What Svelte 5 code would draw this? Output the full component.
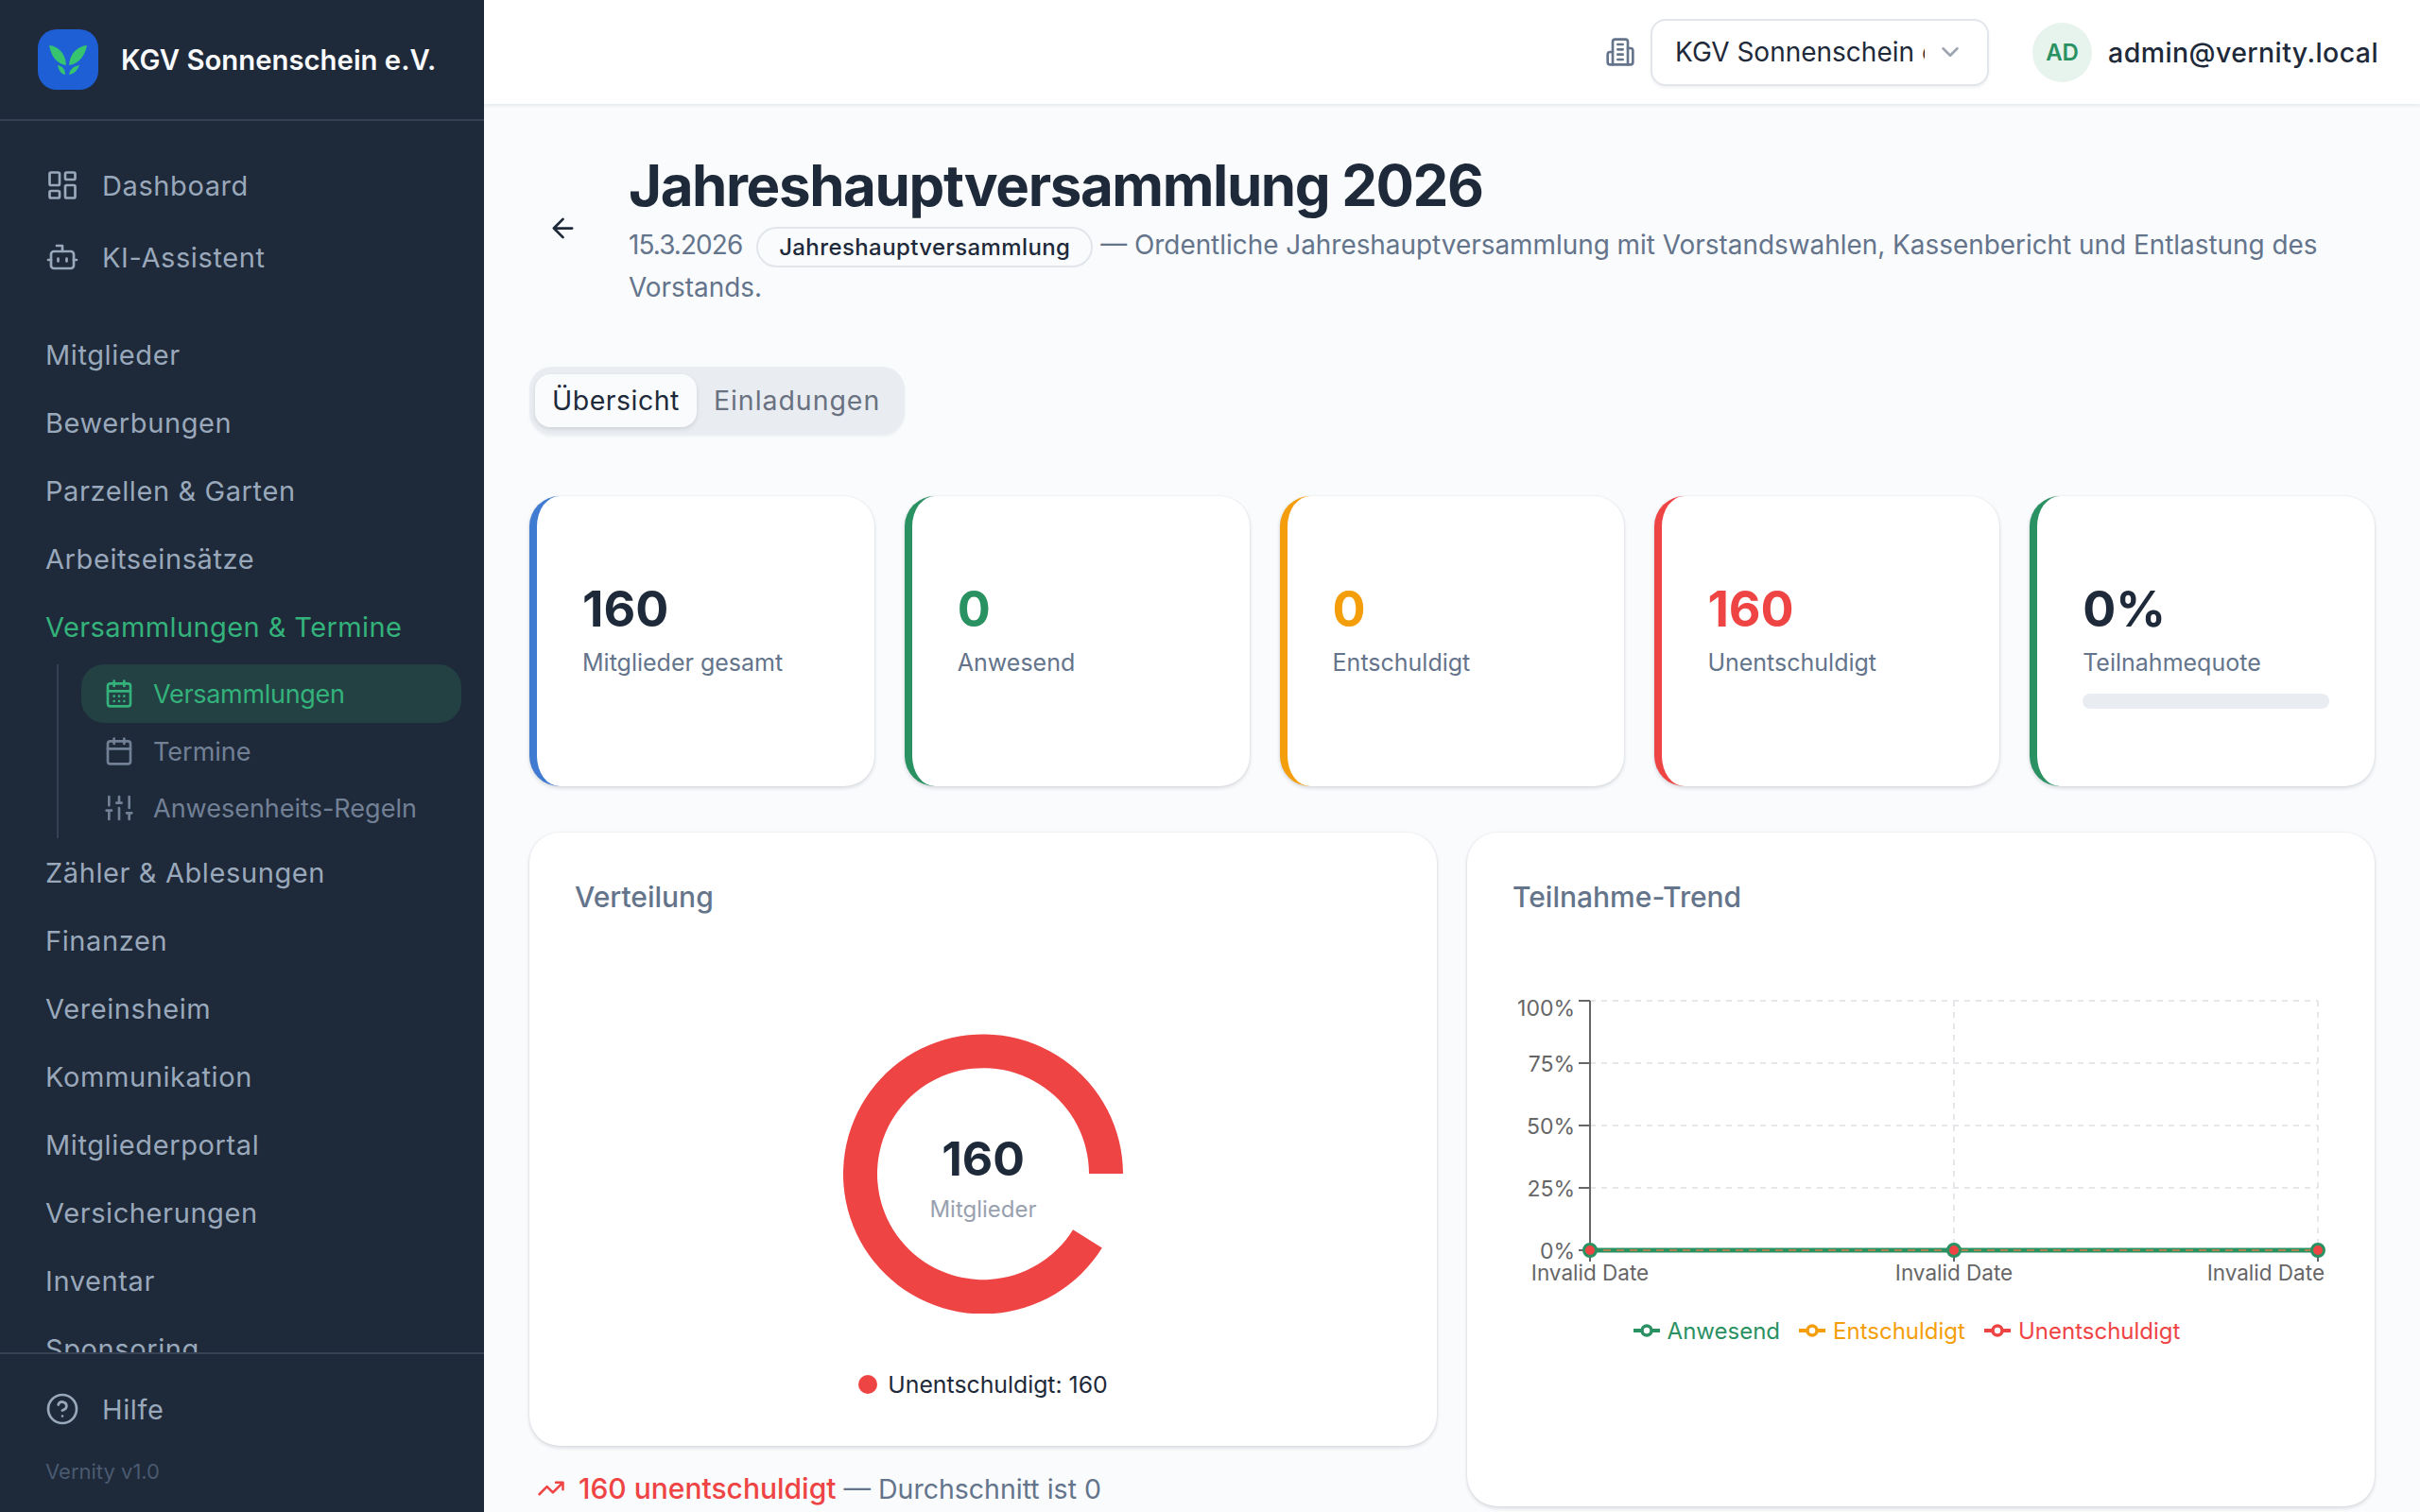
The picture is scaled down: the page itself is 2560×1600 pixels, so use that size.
<script>
	const groups = ['Mitglieder', 'Bewerbungen', 'Parzellen & Garten', 'Arbeitseinsätze'];
	const groupsAfter = [
		'Zähler & Ablesungen',
		'Finanzen',
		'Vereinsheim',
		'Kommunikation',
		'Mitgliederportal',
		'Versicherungen',
		'Inventar',
		'Sponsoring',
		'Einstellungen'
	];

	const stats = [
		{ value: '160', label: 'Mitglieder gesamt', accent: '#3f7bd0', color: '#1e2939' },
		{ value: '0', label: 'Anwesend', accent: '#2a9162', color: '#2a9162' },
		{ value: '0', label: 'Entschuldigt', accent: '#f59e0b', color: '#f59e0b' },
		{ value: '160', label: 'Unentschuldigt', accent: '#ef4444', color: '#ef4444' },
		{ value: '0%', label: 'Teilnahmequote', accent: '#2a9162', color: '#1e2939', bar: true }
	];

	// trend chart geometry
	const left = 82;
	const mid = 467;
	const right = 852;
	const top = 27;
	const step = 66;
	const yTicks = ['100%', '75%', '50%', '25%', '0%'];
	const xs = [left, mid, right];
	const legend = [
		{ label: 'Anwesend', color: '#2a9162' },
		{ label: 'Entschuldigt', color: '#f59e0b' },
		{ label: 'Unentschuldigt', color: '#ef4444' }
	];
</script>

<div class="shell">
	<aside class="sidebar">
		<div class="brand">
			<div class="logo">
				<svg viewBox="0 0 64 64" width="64" height="64">
					<path d="M12 17c9 1 17 7 18 21C20 37 14 28 12 17Z" fill="#37c46e" />
					<path d="M52 17c-9 1-18 7-19 21 10-1 17-10 19-21Z" fill="#37c46e" />
					<path d="M21 38c5 1 8 4 8 10-5-1-7-5-8-10Z" fill="#37c46e" />
					<path d="M44 38c-6 1-10 4-11 10 6-1 9-5 11-10Z" fill="#37c46e" />
				</svg>
			</div>
			<span class="brand-name">KGV Sonnenschein e.V.</span>
		</div>

		<nav class="nav">
			<a class="top-link">
				<svg class="ico" viewBox="0 0 24 24"><rect x="3" y="3" width="7" height="9" rx="1" /><rect x="14" y="3" width="7" height="5" rx="1" /><rect x="14" y="12" width="7" height="9" rx="1" /><rect x="3" y="16" width="7" height="5" rx="1" /></svg>
				Dashboard
			</a>
			<a class="top-link">
				<svg class="ico" viewBox="0 0 24 24"><path d="M12 8V4H8" /><rect x="4" y="8" width="16" height="12" rx="2" /><path d="M2 14h2M20 14h2M15 13v2M9 13v2" /></svg>
				KI-Assistent
			</a>

			<div class="groups">
				{#each groups as g}
					<a class="group">{g}</a>
				{/each}
				<a class="group open">Versammlungen &amp; Termine</a>
				<div class="subnav">
					<a class="sub active">
						<svg class="ico" viewBox="0 0 24 24"><path d="M8 2v4M16 2v4" /><rect x="3" y="4" width="18" height="18" rx="2" /><path d="M3 10h18M8 14h.01M12 14h.01M16 14h.01M8 18h.01M12 18h.01M16 18h.01" /></svg>
						Versammlungen
					</a>
					<a class="sub">
						<svg class="ico" viewBox="0 0 24 24"><path d="M8 2v4M16 2v4" /><rect x="3" y="4" width="18" height="18" rx="2" /><path d="M3 10h18" /></svg>
						Termine
					</a>
					<a class="sub">
						<svg class="ico" viewBox="0 0 24 24"><path d="M4 21v-7M4 10V3M12 21v-9M12 8V3M20 21v-5M20 12V3M2 14h4M10 8h4M18 16h4" /></svg>
						Anwesenheits-Regeln
					</a>
				</div>
				{#each groupsAfter as g}
					<a class="group">{g}</a>
				{/each}
			</div>
		</nav>

		<div class="side-foot">
			<a class="top-link help">
				<svg class="ico" viewBox="0 0 24 24"><circle cx="12" cy="12" r="10" /><path d="M9.09 9a3 3 0 0 1 5.83 1c0 2-3 3-3 3M12 17h.01" /></svg>
				Hilfe
			</a>
			<div class="version">Vernity v1.0</div>
		</div>
	</aside>

	<div class="main">
		<header class="topbar">
			<svg class="org-ico" viewBox="0 0 24 24"><path d="M6 22V4a2 2 0 0 1 2-2h8a2 2 0 0 1 2 2v18Z" /><path d="M6 12H4a2 2 0 0 0-2 2v6a2 2 0 0 0 2 2h2M18 9h2a2 2 0 0 1 2 2v9a2 2 0 0 1-2 2h-2M10 6h4M10 10h4M10 14h4M10 18h4" /></svg>
			<div class="org-select">
				<span class="org-name">KGV Sonnenschein e.V.</span>
				<svg class="chev" viewBox="0 0 24 24"><path d="m6 9 6 6 6-6" /></svg>
			</div>
			<div class="avatar">AD</div>
			<span class="email">admin@vernity.local</span>
		</header>

		<main class="content">
			<div class="page-head">
				<button class="back" aria-label="Zurück">
					<svg viewBox="0 0 24 24"><path d="m12 19-7-7 7-7M19 12H5" /></svg>
				</button>
				<div class="head-text">
					<h1>Jahreshauptversammlung 2026</h1>
					<p class="desc">
						<span class="date">15.3.2026</span> <span class="chip">Jahreshauptversammlung</span> — Ordentliche Jahreshauptversammlung mit Vorstandswahlen, Kassenbericht und Entlastung des Vorstands.
					</p>
				</div>
			</div>

			<div class="tabs">
				<button class="tab selected">Übersicht</button>
				<button class="tab">Einladungen</button>
			</div>

			<div class="stats">
				{#each stats as s}
					<div class="stat" style="border-left-color: {s.accent}">
						<div class="stat-value" style="color: {s.color}">{s.value}</div>
						<div class="stat-label">{s.label}</div>
						{#if s.bar}
							<div class="bar"></div>
						{/if}
					</div>
				{/each}
			</div>

			<div class="charts">
				<div class="col">
					<section class="panel donut-panel">
						<h2>Verteilung</h2>
						<div class="donut-wrap">
							<svg class="donut" viewBox="0 0 296 296" width="296" height="296">
								<path d="M296 148A148 148 0 1 0 273.8 226.4L243.1 207.3A112 112 0 1 1 260 148Z" fill="#ef4444" />
							</svg>
							<div class="donut-center">
								<div class="donut-num">160</div>
								<div class="donut-cap">Mitglieder</div>
							</div>
						</div>
						<div class="donut-legend"><span class="dot"></span>Unentschuldigt: 160</div>
					</section>
					<p class="insight">
						<svg viewBox="0 0 24 24"><path d="M22 7l-8.5 8.5-5-5L2 17M16 7h6v6" /></svg>
						<span><span class="bad">160 unentschuldigt</span> — Durchschnitt ist 0</span>
					</p>
				</div>

				<section class="panel trend-panel">
					<h2>Teilnahme-Trend</h2>
					<svg class="trend" viewBox="0 0 864 400" width="864" height="400">
						{#each yTicks as t, i}
							<line x1={left} x2={right} y1={top + i * step} y2={top + i * step} class="grid" />
							<line x1={left - 12} x2={left} y1={top + i * step} y2={top + i * step} class="axis" />
							<text x={left - 16} y={(i === 0 ? top + 7 : top + i * step) + 9} text-anchor="end" class="tick">{t}</text>
						{/each}
						<line x1={mid} x2={mid} y1={top} y2={top + 4 * step} class="grid" />
						<line x1={right} x2={right} y1={top} y2={top + 4 * step} class="grid" />
						<line x1={left} x2={left} y1={top} y2={top + 4 * step + 12} class="axis" />
						<line x1={mid} x2={mid} y1={top + 4 * step} y2={top + 4 * step + 12} class="axis" />
						<line x1={right} x2={right} y1={top + 4 * step} y2={top + 4 * step + 12} class="axis" />

						<line x1={left} x2={right} y1={top + 4 * step} y2={top + 4 * step} stroke="#2a9162" stroke-width="5" />
						<line x1={left} x2={right} y1={top + 4 * step} y2={top + 4 * step} stroke="#b08050" stroke-width="2" stroke-dasharray="8 6" />
						{#each xs as x}
							<circle cx={x} cy={top + 4 * step} r="6.5" fill="#ef4444" stroke="#2a9162" stroke-width="3" />
						{/each}

						<text x={left} y={top + 4 * step + 32} text-anchor="middle" class="tick date-tick">Invalid Date</text>
						<text x={mid} y={top + 4 * step + 32} text-anchor="middle" class="tick date-tick">Invalid Date</text>
						<text x={right + 7} y={top + 4 * step + 32} text-anchor="end" class="tick date-tick">Invalid Date</text>
					</svg>
					<div class="trend-legend">
						{#each legend as l}
							<span class="leg" style="color: {l.color}">
								<svg viewBox="0 0 28 14" width="28" height="14">
									<line x1="0" x2="28" y1="7" y2="7" stroke={l.color} stroke-width="4" />
									<circle cx="14" cy="7" r="5" fill="#fff" stroke={l.color} stroke-width="3.5" />
								</svg>
								{l.label}
							</span>
						{/each}
					</div>
				</section>
			</div>
		</main>
	</div>
</div>

<style>
	:global(body) {
		margin: 0;
		background: #f9fbfd;
		font-family: Inter, 'Noto Sans', sans-serif;
		color: #1e2939;
	}

	.shell {
		display: flex;
		height: 100vh;
		overflow: hidden;
	}

	.ico {
		width: 36px;
		height: 36px;
		fill: none;
		stroke: currentColor;
		stroke-width: 1.8;
		stroke-linecap: round;
		stroke-linejoin: round;
		flex-shrink: 0;
	}

	/* sidebar */
	.sidebar {
		width: 512px;
		flex-shrink: 0;
		background: #1e2939;
		display: flex;
		flex-direction: column;
		color: #99a8ba;
	}

	.brand {
		height: 128px;
		box-sizing: border-box;
		padding: 0 40px;
		display: flex;
		align-items: center;
		gap: 24px;
		border-bottom: 2px solid #364153;
		flex-shrink: 0;
	}

	.logo {
		width: 64px;
		height: 64px;
		background: #1f5fd6;
		border-radius: 20px;
		flex-shrink: 0;
	}

	.logo svg {
		display: block;
	}

	.brand-name {
		color: #f8fafc;
		font-size: 29.3px;
		font-weight: 600;
		white-space: nowrap;
	}

	.nav {
		flex: 1;
		min-height: 0;
		overflow: hidden;
		padding-top: 30px;
	}

	.top-link {
		height: 76px;
		padding-left: 48px;
		display: flex;
		align-items: center;
		gap: 24px;
		font-size: 29px;
		letter-spacing: 0.6px;
	}

	.groups {
		margin-top: 29px;
	}

	.group {
		display: flex;
		align-items: center;
		height: 72px;
		padding-left: 48px;
		font-size: 29px;
		letter-spacing: 0.6px;
	}

	.group.open {
		color: #34b27b;
		letter-spacing: 0.4px;
	}

	.subnav {
		margin: 4px 24px 0 60px;
		padding-left: 24px;
		border-left: 2px solid #364153;
		height: 184px;
	}

	.sub {
		height: 60px;
		box-sizing: border-box;
		padding-left: 24px;
		display: flex;
		align-items: center;
		gap: 20px;
		border-radius: 24px;
		font-size: 27px;
		color: #728096;
	}

	.sub .ico {
		width: 32px;
		height: 32px;
		stroke-width: 2;
	}

	.sub.active {
		height: 62px;
		background: #234043;
		color: #34b27b;
		letter-spacing: -0.3px;
	}

	.side-foot {
		border-top: 2px solid #364153;
		flex-shrink: 0;
		height: 169px;
		box-sizing: border-box;
		padding-top: 20px;
	}

	.help {
		height: 76px;
	}

	.version {
		margin-top: 15px;
		padding-left: 48px;
		font-size: 22px;
		color: #4a5a70;
	}

	/* main column */
	.main {
		flex: 1;
		min-width: 0;
		display: flex;
		flex-direction: column;
	}

	.topbar {
		height: 110px;
		flex-shrink: 0;
		background: #fff;
		box-shadow: 0 2px 4px rgba(15, 23, 42, 0.08);
		display: flex;
		align-items: center;
		justify-content: flex-end;
		padding-right: 44px;
	}

	.org-ico {
		width: 32px;
		height: 32px;
		fill: none;
		stroke: #64748b;
		stroke-width: 2;
		stroke-linecap: round;
		stroke-linejoin: round;
		margin-right: 16px;
	}

	.org-select {
		width: 358px;
		height: 71px;
		box-sizing: border-box;
		border: 2px solid #e2e5ea;
		border-radius: 16px;
		background: #fff;
		box-shadow: 0 2px 3px rgba(15, 23, 42, 0.06);
		display: flex;
		align-items: center;
		padding: 0 24px;
		font-size: 28px;
		color: #1e2939;
	}

	.org-name {
		width: 264px;
		overflow: hidden;
		white-space: nowrap;
	}

	.chev {
		width: 30px;
		height: 30px;
		margin-left: auto;
		fill: none;
		stroke: #9ca3af;
		stroke-width: 2;
		stroke-linecap: round;
		stroke-linejoin: round;
	}

	.avatar {
		width: 63px;
		height: 63px;
		margin-left: 46px;
		border-radius: 50%;
		background: #e7f3ed;
		color: #2a9162;
		font-size: 24px;
		font-weight: 600;
		display: flex;
		align-items: center;
		justify-content: center;
	}

	.email {
		margin-left: 17px;
		font-size: 28.5px;
		font-weight: 500;
		letter-spacing: 0.4px;
	}

	.content {
		flex: 1;
		min-height: 0;
		overflow: hidden;
		padding: 48px 48px 0;
	}

	.page-head {
		display: flex;
		align-items: center;
		margin-bottom: 62px;
	}

	.back {
		width: 105px;
		flex-shrink: 0;
		border: 0;
		background: none;
		padding: 0 0 0 19px;
		text-align: left;
		color: #1e2939;
	}

	.back svg {
		width: 33px;
		height: 33px;
		display: block;
		fill: none;
		stroke: currentColor;
		stroke-width: 2;
		stroke-linecap: round;
		stroke-linejoin: round;
	}

	h1 {
		margin: 0;
		padding-top: 2px;
		font-size: 60px;
		line-height: 72px;
		font-weight: 700;
		letter-spacing: -1.4px;
		color: #1e2939;
	}

	.desc {
		margin: 6px 0 0;
		font-size: 27.9px;
		line-height: 43px;
		color: #64748b;
	}

	.date {
		letter-spacing: -0.9px;
	}

	.chip {
		display: inline-block;
		margin: 0 0 0 7px;
		padding: 0 22px;
		height: 43px;
		line-height: 39px;
		box-sizing: border-box;
		border: 2px solid #e2e5ea;
		border-radius: 22px;
		font-size: 24px;
		font-weight: 500;
		letter-spacing: 0.4px;
		color: #1e2939;
		vertical-align: middle;
	}

	.tabs {
		display: flex;
		width: fit-content;
		background: #e9edf1;
		border-radius: 24px;
		padding: 8px 8px 8px 6px;
		box-shadow: 0 2px 3px rgba(15, 23, 42, 0.05);
	}

	.tab {
		border: 0;
		background: none;
		font: inherit;
		font-size: 28.5px;
		height: 56px;
		padding: 0 18px;
		color: #6a7282;
		letter-spacing: 0.95px;
		border-radius: 16px;
	}

	.tab.selected {
		background: #f9fbfd;
		color: #1e2939;
		letter-spacing: 0.5px;
		box-shadow: 0 2px 4px rgba(15, 23, 42, 0.12);
	}

	.stats {
		display: grid;
		grid-template-columns: repeat(5, 1fr);
		gap: 32px;
		margin-top: 65px;
	}

	.stat {
		height: 307px;
		box-sizing: border-box;
		background: #fff;
		border-radius: 32px;
		border-left: 8px solid;
		box-shadow: 0 2px 4px rgba(15, 23, 42, 0.14), 0 0 2px rgba(15, 23, 42, 0.08);
		padding: 90px 48px 0;
	}

	.stat-value {
		font-size: 52px;
		line-height: 60px;
		font-weight: 700;
	}

	.stat-label {
		margin-top: 8px;
		font-size: 25px;
		line-height: 36px;
		color: #64748b;
	}

	.bar {
		margin-top: 15px;
		height: 16px;
		border-radius: 8px;
		background: #e9edf1;
	}

	.charts {
		display: grid;
		grid-template-columns: 1fr 1fr;
		gap: 32px;
		margin-top: 49px;
		align-items: start;
	}

	.panel {
		background: #fff;
		border-radius: 32px;
		box-shadow: 0 2px 4px rgba(15, 23, 42, 0.14), 0 0 2px rgba(15, 23, 42, 0.08);
		box-sizing: border-box;
		padding: 48px;
	}

	h2 {
		margin: 0;
		font-size: 30px;
		line-height: 40px;
		font-weight: 500;
		color: #64748b;
	}

	.donut-panel {
		height: 649px;
	}

	.donut-wrap {
		position: relative;
		width: 296px;
		height: 296px;
		margin: 125px auto 0;
	}

	.donut {
		display: block;
	}

	.donut-center {
		position: absolute;
		inset: 0;
		padding-top: 14px;
		box-sizing: border-box;
		display: flex;
		flex-direction: column;
		align-items: center;
		justify-content: center;
	}

	.donut-num {
		font-size: 50px;
		line-height: 60px;
		font-weight: 700;
		color: #1e2939;
		margin-top: -6px;
	}

	.donut-cap {
		margin-top: 9px;
		font-size: 24px;
		line-height: 30px;
		color: #99a1af;
	}

	.donut-legend {
		margin-top: 60px;
		display: flex;
		align-items: center;
		justify-content: center;
		gap: 11px;
		font-size: 24.8px;
		color: #1e2939;
	}

	.dot {
		width: 20px;
		height: 20px;
		border-radius: 50%;
		background: #ef4444;
	}

	.insight {
		margin: 27px 0 0;
		padding-left: 8px;
		display: flex;
		align-items: center;
		gap: 14px;
		font-size: 28.5px;
		color: #64748b;
		white-space: pre;
	}

	.insight svg {
		width: 30px;
		height: 30px;
		fill: none;
		stroke: #ef4444;
		stroke-width: 2;
		stroke-linecap: round;
		stroke-linejoin: round;
	}

	.bad {
		color: #ef4444;
		font-size: 30px;
		font-weight: 500;
	}

	.trend-panel {
		height: 713px;
	}

	.trend {
		display: block;
		margin-top: 63px;
		margin-left: 0;
	}

	.grid {
		stroke: #e5e7eb;
		stroke-width: 2;
		stroke-dasharray: 6 6;
	}

	.axis {
		stroke: #666;
		stroke-width: 2;
	}

	.tick {
		font-size: 23px;
		fill: #666;
	}

	.date-tick {
		font-size: 22.5px;
	}

	.trend-legend {
		display: flex;
		justify-content: center;
		gap: 20px;
		margin-top: -38px;
		padding-right: 30px;
		font-size: 24px;
	}

	.leg {
		display: inline-flex;
		align-items: center;
		gap: 8px;
	}
</style>
